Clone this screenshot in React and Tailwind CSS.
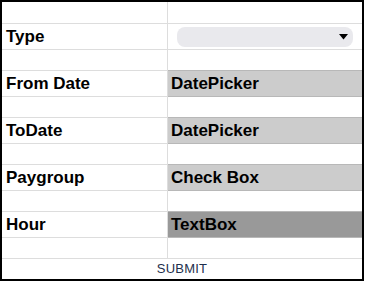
import React from 'react';

const fields = [
    { label: 'Type', kind: 'select' },
    { label: 'From Date', kind: 'cell', text: 'DatePicker', bg: 'bg-[#cccccc]' },
    { label: 'ToDate', kind: 'cell', text: 'DatePicker', bg: 'bg-[#cccccc]' },
    { label: 'Paygroup', kind: 'cell', text: 'Check Box', bg: 'bg-[#cccccc]' },
    { label: 'Hour', kind: 'cell', text: 'TextBox', bg: 'bg-[#999999]' },
];

const Spacer = ({ first }) => (
    <div className={`flex ${first ? 'h-[22px]' : 'h-[21px]'} border-b border-[#dddddd]`}>
        <div className="w-[166px] border-r border-[#dddddd]"></div>
        <div className="flex-1"></div>
    </div>
);

const App = () => {
    return (
        <div className="w-[364px] h-[281px] border-2 border-black bg-white font-['Liberation_Sans',Arial,sans-serif] text-black">
            {fields.map((f, i) => (
                <React.Fragment key={f.label}>
                    <Spacer first={i === 0} />
                    <div className="flex h-[26px] border-b border-[#dddddd]">
                        <div className="w-[166px] border-r border-[#dddddd] flex items-center pl-[4px] text-[17px] font-bold">
                            {f.label}
                        </div>
                        {f.kind === 'select' ? (
                            <div className="flex-1 flex items-center pl-[9px] pr-[9px]">
                                <div className="w-full h-[20px] rounded-[8px] bg-[#e9e9ed] flex items-center justify-end pr-[5px]">
                                    <svg width="9" height="6" viewBox="0 0 9 6">
                                        <path d="M0 0 L9 0 L4.5 5.5 Z" fill="#000" />
                                    </svg>
                                </div>
                            </div>
                        ) : (
                            <div className={`flex-1 flex items-center pl-[3px] text-[17px] font-bold ${f.bg} shadow-[0_-1px_0_#b8b8b8,0_1px_0_#b8b8b8]`}>
                                {f.text}
                            </div>
                        )}
                    </div>
                </React.Fragment>
            ))}
            <Spacer />
            <div className="h-[20px] flex items-center justify-center text-[13px] font-medium text-[#1e2f4d] tracking-[0.2px]">
                SUBMIT
            </div>
        </div>
    );
};

export default App;
